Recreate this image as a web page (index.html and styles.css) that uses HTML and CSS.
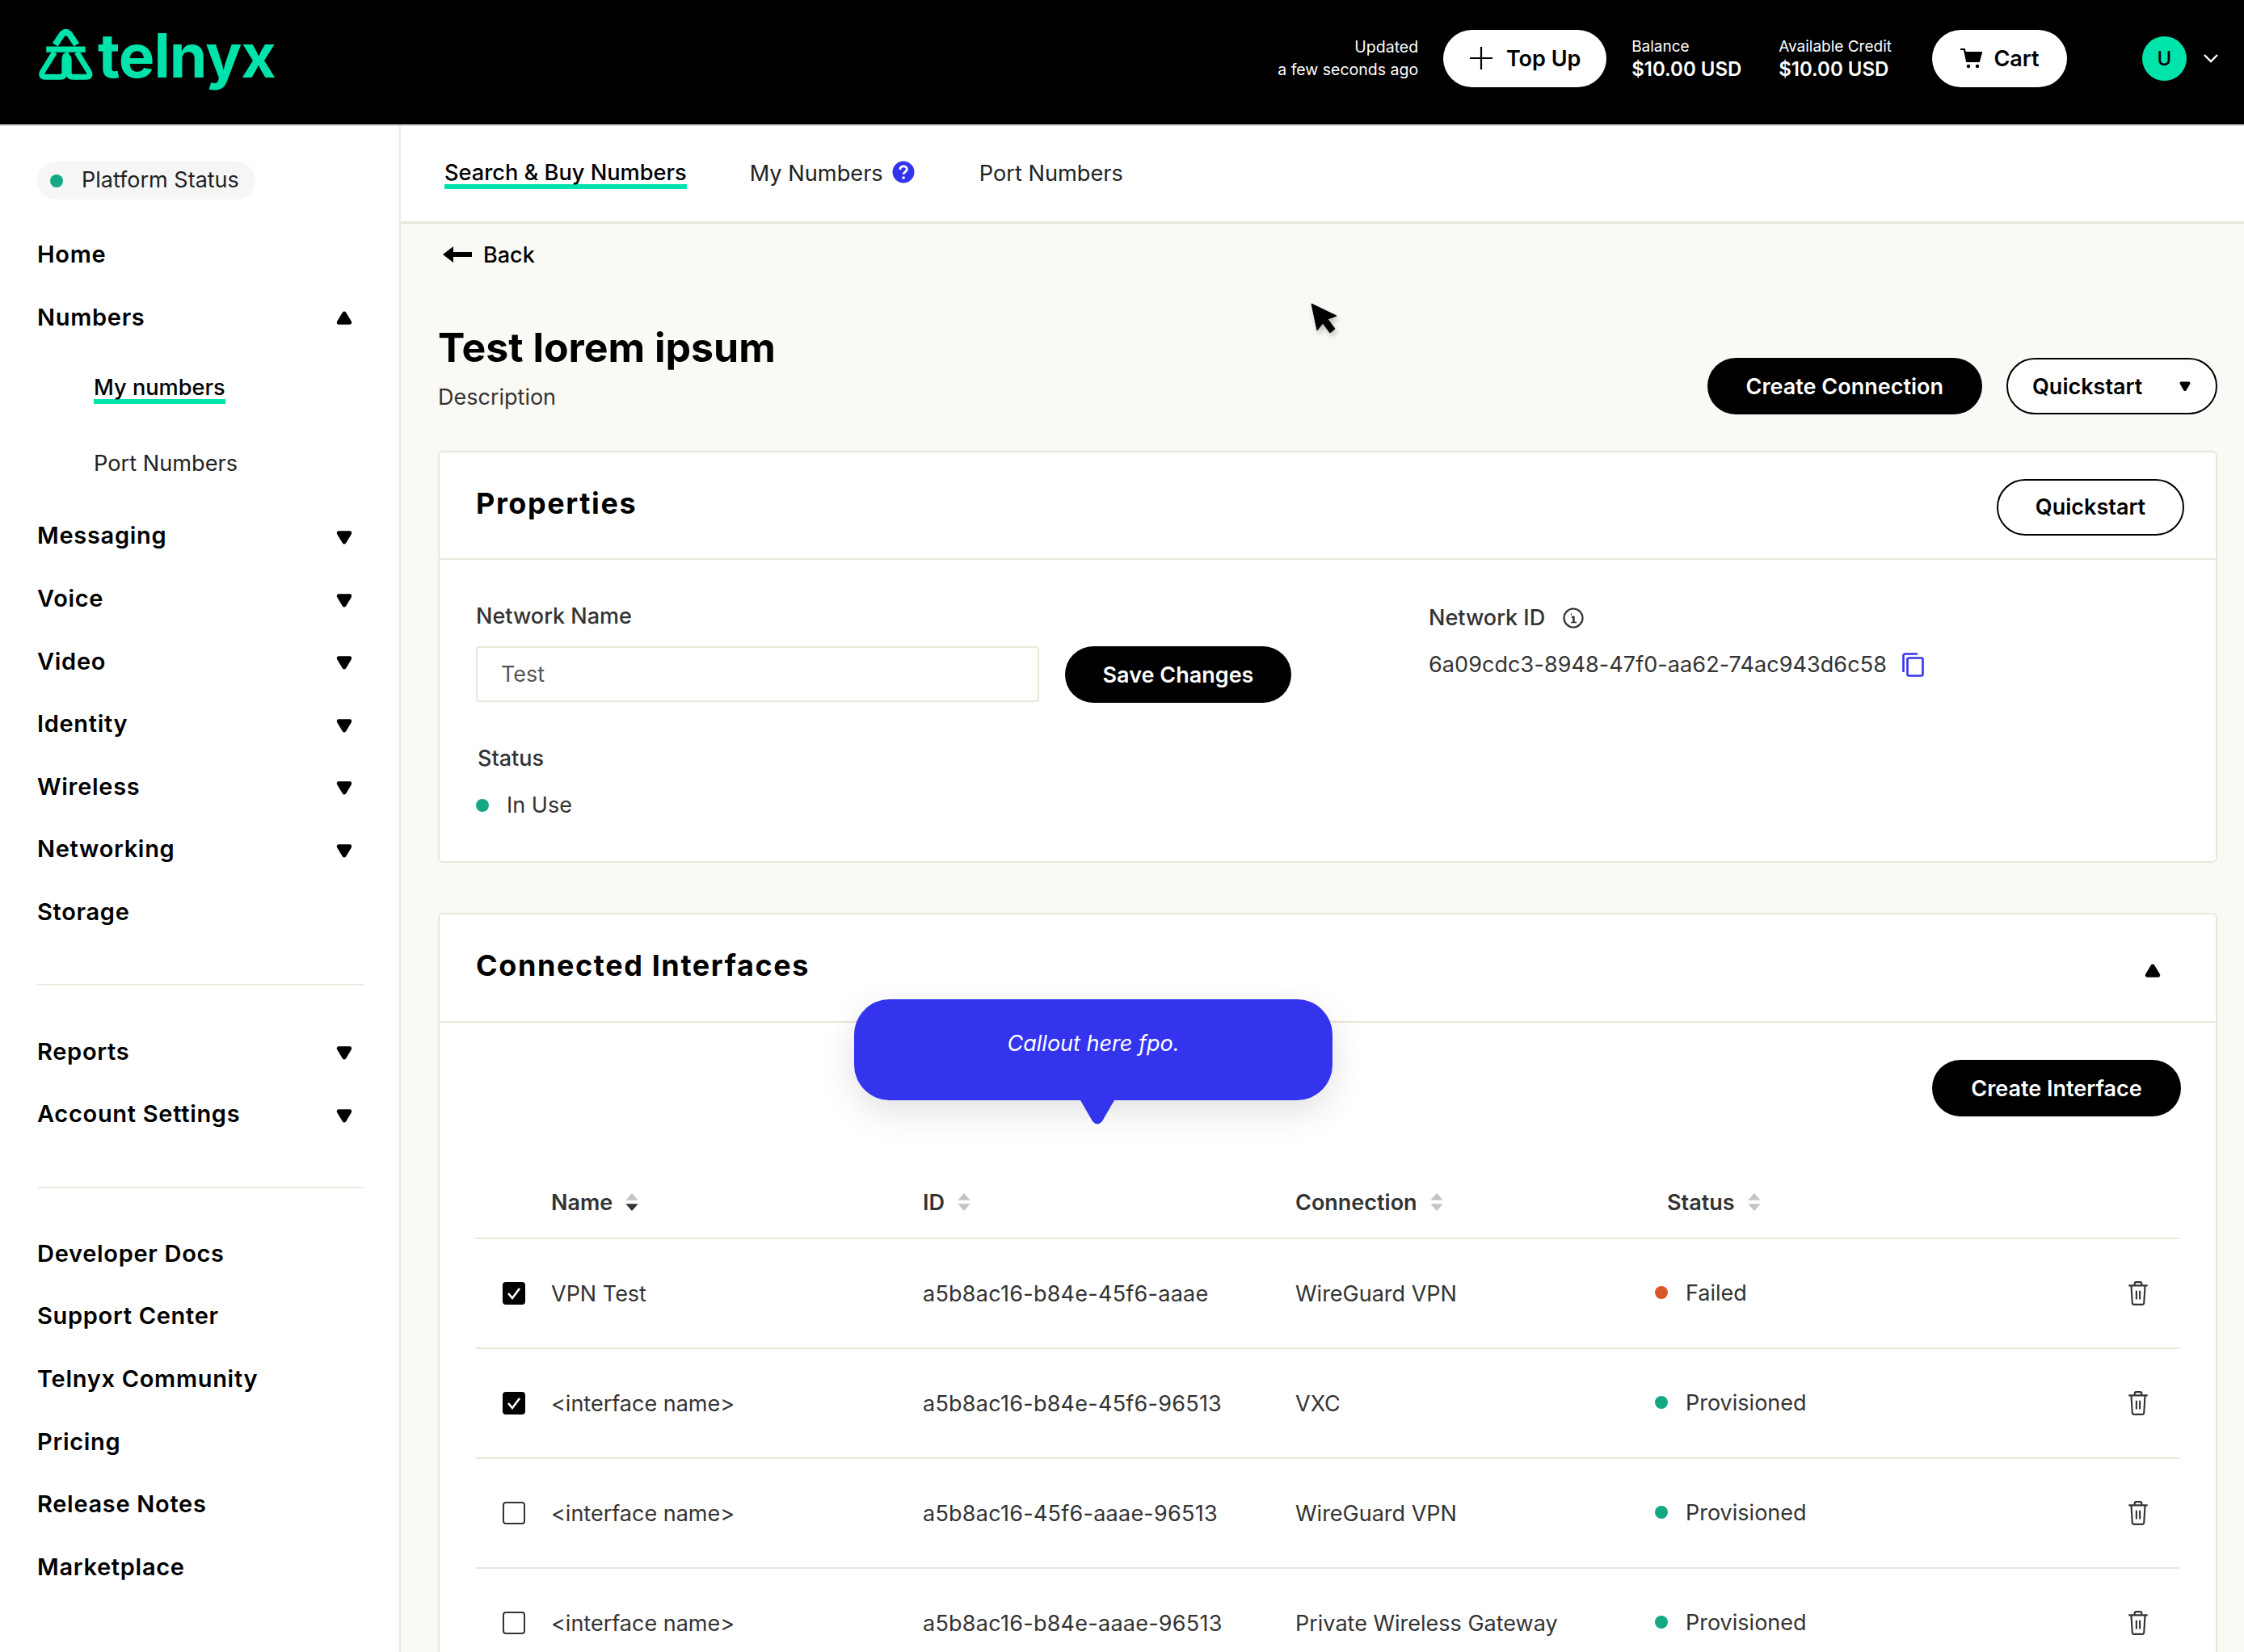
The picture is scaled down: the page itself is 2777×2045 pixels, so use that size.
FILE: index.html
```html
<!DOCTYPE html>
<html lang="en">
<head>
    <meta charset="UTF-8">
    <meta name="viewport" content="width=device-width, initial-scale=1.0">
    <title>Telnyx - Test lorem ipsum</title>
    <link rel="stylesheet" href="styles.css">
</head>
<body>
    <svg class="defs" width="0" height="0">
        <symbol id="caret-down" viewBox="0 0 20 18"><path d="M4 2h12c2 0 3 2 2 3.600l-6 10c-1 1.500-3 1.500-4 0l-6-10C1 4 2 2 4 2z"/></symbol>
        <symbol id="caret-up" viewBox="0 0 20 18"><path d="M4 16h12c2 0 3-2 2-3.600l-6-10c-1-1.500-3-1.500-4 0l-6 10C1 14 2 16 4 16z"/></symbol>
        <symbol id="trash" viewBox="0 0 26 30"><path d="M2 6h22M5 6l1.200 20c.1 1.500 1 2 2 2h9.600c1 0 1.900-.5 2-2L21 6M9 6V3.500C9 2.500 9.500 2 10.500 2h5c1 0 1.500.5 1.500 1.500V6M11 12v10M15 12v10" fill="none" stroke="#333" stroke-width="2"/></symbol>
    </svg>

    <header class="topbar">
        <a class="logo">
            <svg class="logo-mark" viewBox="78 45 214 192" width="71" height="64">
                <g fill="none" stroke="#00e3aa" stroke-width="24">
                    <path d="M145 103l27-40q13-13 26 0l27 40"/>
                    <path d="M112 120h146" stroke-width="22"/>
                    <path d="M143 131L97 205q-7 18 12 18h55q16 0 16-16v-48q0-18 16-18" stroke-width="21"/>
                    <path d="M226 131l46 74q7 18-12 18h-48q-16 0-16-16v-48q0-12-14-16" stroke-width="21"/>
                </g>
            </svg>
            <span class="logo-word">telnyx</span>
        </a>
        <div class="topbar-right">
            <div class="updated">Updated<br>a few seconds ago</div>
            <button class="btn-white topup">
                <svg width="30" height="30" viewBox="0 0 30 30"><path d="M15 1v28M1 15h28" stroke="#000" stroke-width="2.200"/></svg>
                Top Up
            </button>
            <div class="money balance"><span>Balance</span><b>$10.00 USD</b></div>
            <div class="money credit"><span>Available Credit</span><b>$10.00 USD</b></div>
            <button class="btn-white cart">
                <svg width="28" height="28" viewBox="0 0 28 28"><path d="M1 3h5l1 4h20l-3 11H9L6 4" fill="#000" stroke="#000" stroke-width="2"/><circle cx="11" cy="24" r="2.200"/><circle cx="22" cy="24" r="2.200"/></svg>
                Cart
            </button>
            <div class="avatar">U</div>
            <svg class="chevron" width="20" height="12" viewBox="0 0 20 12"><path d="M2 2l8 8 8-8" fill="none" stroke="#fff" stroke-width="2.400"/></svg>
        </div>
    </header>

    <div class="layout">
        <aside class="sidebar">
            <div class="platform-status"><i class="dot green"></i><span>Platform Status</span></div>
            <nav class="nav first">
                <a class="nav-item">Home</a>
                <a class="nav-item">Numbers <svg class="caret"><use href="#caret-up"/></svg></a>
                <div class="sub">
                    <a class="sub-item"><span class="active">My numbers</span></a>
                    <a class="sub-item">Port Numbers</a>
                </div>
                <a class="nav-item">Messaging <svg class="caret"><use href="#caret-down"/></svg></a>
                <a class="nav-item">Voice <svg class="caret"><use href="#caret-down"/></svg></a>
                <a class="nav-item">Video <svg class="caret"><use href="#caret-down"/></svg></a>
                <a class="nav-item">Identity <svg class="caret"><use href="#caret-down"/></svg></a>
                <a class="nav-item">Wireless <svg class="caret"><use href="#caret-down"/></svg></a>
                <a class="nav-item">Networking <svg class="caret"><use href="#caret-down"/></svg></a>
                <a class="nav-item">Storage</a>
            </nav>
            <hr class="nav-line">
            <nav class="nav">
                <a class="nav-item">Reports <svg class="caret"><use href="#caret-down"/></svg></a>
                <a class="nav-item">Account Settings <svg class="caret"><use href="#caret-down"/></svg></a>
            </nav>
            <hr class="nav-line">
            <nav class="nav">
                <a class="nav-item">Developer Docs</a>
                <a class="nav-item">Support Center</a>
                <a class="nav-item">Telnyx Community</a>
                <a class="nav-item">Pricing</a>
                <a class="nav-item">Release Notes</a>
                <a class="nav-item">Marketplace</a>
            </nav>
        </aside>

        <main class="main">
            <div class="tabs">
                <a class="tab active-tab"><span class="active">Search &amp; Buy Numbers</span></a>
                <a class="tab help-tab">My Numbers
                    <svg width="28" height="28" viewBox="0 0 28 28"><circle cx="14" cy="14" r="13.500" fill="#3434ef"/><path d="M9.800 11c0-2.700 2-4.200 4.300-4.200s4.200 1.500 4.200 3.800c0 3.300-4.200 3.200-4.200 6.200" fill="none" stroke="#fff" stroke-width="2.800"/><circle cx="14.100" cy="21" r="1.800" fill="#fff"/></svg>
                </a>
                <a class="tab port-tab">Port Numbers</a>
            </div>

            <div class="content">
                <a class="back">
                    <svg width="36" height="20" viewBox="0 0 36 20"><path d="M0 10L13 0v7h23v6H13v7z"/></svg>
                    Back
                </a>
                <div class="page-head">
                    <div>
                        <h1>Test lorem ipsum</h1>
                        <p class="desc">Description</p>
                    </div>
                    <div class="head-actions">
                        <button class="btn-black">Create Connection</button>
                        <button class="btn-outline quick-caret">Quickstart <svg width="16" height="14"><use href="#caret-down"/></svg></button>
                    </div>
                </div>

                <section class="card">
                    <div class="card-head">
                        <h2>Properties</h2>
                        <button class="btn-outline quick">Quickstart</button>
                    </div>
                    <div class="props">
                        <div>
                            <label class="label">Network Name</label>
                            <div class="name-row">
                                <input class="input" type="text" value="Test">
                                <button class="btn-black save">Save Changes</button>
                            </div>
                            <div class="label status-label">Status</div>
                            <div class="in-use"><i class="dot green"></i>In Use</div>
                        </div>
                        <div class="network-id">
                            <div class="label">Network ID
                                <svg width="26" height="26" viewBox="0 0 26 26"><circle cx="13" cy="13" r="11.500" fill="none" stroke="#333" stroke-width="2.200"/><path d="M10 8.500h1M11 12h2.500v6.500" fill="none" stroke="#333" stroke-width="2.400"/><path d="M10 18.500h7" stroke="#333" stroke-width="1.600"/></svg>
                            </div>
                            <div class="id-row">6a09cdc3-8948-47f0-aa62-74ac943d6c58
                                <svg width="27" height="30" viewBox="0 0 27 30"><path d="M19 1.500H3.500c-1 0-2 1-2 2V24" fill="none" stroke="#3434ef" stroke-width="2.600"/><rect x="6.500" y="6.500" width="19" height="22" rx="2" fill="none" stroke="#3434ef" stroke-width="2.600"/></svg>
                            </div>
                        </div>
                    </div>
                </section>

                <section class="card interfaces">
                    <div class="card-head">
                        <h2>Connected Interfaces</h2>
                        <svg class="card-caret"><use href="#caret-up"/></svg>
                    </div>
                    <div class="callout">Callout here fpo.</div>
                    <div class="table-wrap">
                        <div class="table-actions"><button class="btn-black">Create Interface</button></div>
                        <div class="row head-row">
                            <span></span>
                            <span class="th">Name <svg width="20" height="24" viewBox="0 0 18 22"><path d="M9 1l7 8H2z" fill="#c4c4c4"/><path d="M9 21l7-8H2z" fill="#333"/></svg></span>
                            <span class="th">ID <svg width="20" height="24" viewBox="0 0 18 22"><path d="M9 1l7 8H2zM9 21l7-8H2z" fill="#c4c4c4"/></svg></span>
                            <span class="th">Connection <svg width="20" height="24" viewBox="0 0 18 22"><path d="M9 1l7 8H2zM9 21l7-8H2z" fill="#c4c4c4"/></svg></span>
                            <span class="th">Status <svg width="20" height="24" viewBox="0 0 18 22"><path d="M9 1l7 8H2zM9 21l7-8H2z" fill="#c4c4c4"/></svg></span>
                            <span></span>
                        </div>
                        <div class="row">
                            <span class="check on"><svg width="20" height="18" viewBox="0 0 20 18"><path d="M3 9l5 6L17 3" fill="none" stroke="#fff" stroke-width="2.600"/></svg></span>
                            <span>VPN Test</span>
                            <span class="cell-id">a5b8ac16-b84e-45f6-aaae</span>
                            <span>WireGuard VPN</span>
                            <span class="status"><i class="dot red"></i>Failed</span>
                            <svg class="trash"><use href="#trash"/></svg>
                        </div>
                        <div class="row">
                            <span class="check on"><svg width="20" height="18" viewBox="0 0 20 18"><path d="M3 9l5 6L17 3" fill="none" stroke="#fff" stroke-width="2.600"/></svg></span>
                            <span>&lt;interface name&gt;</span>
                            <span class="cell-id">a5b8ac16-b84e-45f6-96513</span>
                            <span>VXC</span>
                            <span class="status"><i class="dot green"></i>Provisioned</span>
                            <svg class="trash"><use href="#trash"/></svg>
                        </div>
                        <div class="row">
                            <span class="check"></span>
                            <span>&lt;interface name&gt;</span>
                            <span class="cell-id">a5b8ac16-45f6-aaae-96513</span>
                            <span>WireGuard VPN</span>
                            <span class="status"><i class="dot green"></i>Provisioned</span>
                            <svg class="trash"><use href="#trash"/></svg>
                        </div>
                        <div class="row">
                            <span class="check"></span>
                            <span>&lt;interface name&gt;</span>
                            <span class="cell-id">a5b8ac16-b84e-aaae-96513</span>
                            <span>Private Wireless Gateway</span>
                            <span class="status"><i class="dot green"></i>Provisioned</span>
                            <svg class="trash"><use href="#trash"/></svg>
                        </div>
                    </div>
                </section>
            </div>

            <svg class="cursor" width="34" height="38" viewBox="0 0 34 38"><path d="M1 1l31 15-11 4 9 12-6 5-9-12-7 9z" stroke="#000"/></svg>
        </main>
    </div>
</body>
</html>
```

FILE: styles.css
```css
* {
    box-sizing: border-box;
}
body {
    font-family: Inter, "Noto Sans", sans-serif;
    font-size: 27px;
    color: #333;
    margin: 0;
    height: 100vh;
    overflow: hidden;
    background-color: #faf9f5;
    display: flex;
    flex-direction: column;
}
h1, h2, p {
    margin: 0;
}
button {
    font-family: inherit;
    cursor: pointer;
}
.defs {
    position: absolute;
}

/* top bar */
.topbar {
    height: 156px;
    flex: none;
    background-color: #000;
    border-bottom: 2px solid #ddd;
    display: flex;
    align-items: center;
    justify-content: space-between;
    padding: 0 31px 10px 46px;
}
.logo {
    display: flex;
    align-items: flex-start;
    height: 76px;
    margin-top: 4px;
}
.logo-word {
    color: #00e3aa;
    font-size: 75px;
    font-weight: 700;
    letter-spacing: -1px;
    line-height: 72px;
    margin-left: 4px;
    margin-top: -3px;
}
.topbar-right {
    display: flex;
    align-items: center;
    color: #fff;
}
.updated {
    font-size: 19.500px;
    line-height: 28px;
    text-align: right;
    margin-right: 31px;
}
.btn-white {
    height: 71px;
    border: none;
    border-radius: 36px;
    background-color: #fff;
    color: #000;
    font-size: 27px;
    font-weight: 600;
    display: flex;
    align-items: center;
    justify-content: center;
}
.topup {
    width: 202px;
    gap: 16px;
}
.cart {
    width: 167px;
    gap: 14px;
    margin-left: 50px;
}
.money {
    display: flex;
    flex-direction: column;
    font-size: 19px;
    line-height: 28px;
    white-space: nowrap;
}
.money b {
    font-size: 24px;
    font-weight: 600;
}
.balance {
    width: 135px;
    margin-left: 31px;
}
.credit {
    margin-left: 47px;
}
.avatar {
    width: 55px;
    height: 55px;
    border-radius: 50%;
    background-color: #00e3aa;
    color: #000;
    font-size: 24px;
    font-weight: 500;
    display: flex;
    align-items: center;
    justify-content: center;
    margin-left: 93px;
}
.chevron {
    margin-left: 20px;
}

.layout {
    flex: 1;
    display: flex;
    min-height: 0;
}

/* sidebar */
.sidebar {
    width: 496px;
    flex: none;
    background-color: #fff;
    border-right: 2px solid #ebeae0;
    padding: 44px 44px 0 46px;
}
.platform-status {
    display: inline-flex;
    align-items: center;
    height: 47px;
    padding: 0 16px;
    border-radius: 24px;
    background-color: #f6f6f6;
    color: #222;
    width: 270px;
}
.platform-status .dot {
    margin-right: 23px;
}
.platform-status span {
    margin-bottom: 2px;
}
.dot {
    display: inline-block;
    width: 16px;
    height: 16px;
    border-radius: 50%;
    flex: none;
}
.dot.green {
    background-color: #14a883;
}
.dot.red {
    background-color: #d9552b;
}
.nav.first {
    margin-top: 29px;
}
.nav-item {
    display: flex;
    align-items: center;
    justify-content: space-between;
    height: 77.600px;
    color: #000;
    font-size: 29px;
    font-weight: 600;
    letter-spacing: 0.700px;
}
.caret {
    width: 22px;
    height: 20px;
    margin-right: 13px;
    margin-top: 4px;
}
.sub {
    padding: 3px 0 4px 70px;
}
.sub-item {
    display: flex;
    align-items: center;
    height: 93px;
    color: #222;
    font-size: 27.200px;
}
.active {
    display: inline-block;
    line-height: 28px;
    border-bottom: 6px solid #00e3aa;
    color: #000;
    font-weight: 500;
}
.sub-item .active {
    margin-top: 4px;
}
.nav-line {
    border: none;
    border-top: 2px solid #ebeae0;
    margin: 51px 0 42px;
    width: 404px;
}

/* main column */
.main {
    flex: 1;
    min-width: 0;
    position: relative;
}
.tabs {
    height: 121px;
    background-color: #fff;
    border-bottom: 3px solid #e8e7da;
    display: flex;
    align-items: center;
    padding: 0 0 2px 54px;
    color: #222;
    font-size: 27.200px;
}
.tab {
    display: flex;
    align-items: center;
}
.active-tab {
    padding-top: 6px;
}
.help-tab {
    margin-left: 78px;
    gap: 11px;
}
.help-tab svg {
    margin-top: -3px;
}
.port-tab {
    margin-left: 80px;
}
.content {
    padding: 21px 33px 0 46px;
}
.back {
    display: flex;
    align-items: center;
    gap: 14px;
    height: 34px;
    margin-left: 6px;
    color: #000;
    font-weight: 500;
}
.page-head {
    display: flex;
    justify-content: space-between;
    align-items: flex-end;
    margin-top: 68px;
}
h1 {
    font-size: 50px;
    line-height: 60px;
    font-weight: 700;
    color: #000;
}
.desc {
    line-height: 34px;
    margin-top: 15px;
    margin-bottom: 4px;
}
.head-actions {
    display: flex;
    gap: 30px;
}
.btn-black {
    height: 70px;
    padding: 0 48px;
    border: none;
    border-radius: 35px;
    background-color: #000;
    color: #fff;
    font-size: 27px;
    font-weight: 600;
}
.btn-outline {
    height: 70px;
    border: 2px solid #000;
    border-radius: 35px;
    background-color: #fff;
    color: #000;
    font-size: 27px;
    font-weight: 600;
}
.quick-caret {
    width: 261px;
    display: flex;
    align-items: center;
    justify-content: space-between;
    padding: 0 30px;
}
.quick {
    width: 232px;
    margin-top: 4px;
}

/* cards */
.card {
    background-color: #fff;
    border: 2px solid #e8e7da;
    border-radius: 6px;
    margin-top: 45px;
}
.card-head {
    height: 133px;
    border-bottom: 2px solid #e8e7da;
    display: flex;
    align-items: center;
    justify-content: space-between;
    padding: 0 39px 0 45px;
}
h2 {
    font-size: 36px;
    font-weight: 700;
    letter-spacing: 1.600px;
    color: #000;
    margin-bottom: 6px;
}
.props {
    display: grid;
    grid-template-columns: 1179px 1fr;
    padding: 53px 45px 52px;
}
.label {
    display: block;
    line-height: 34px;
    font-weight: 500;
}
.name-row {
    display: flex;
    gap: 32px;
    margin-top: 20px;
}
.input {
    width: 697px;
    height: 69px;
    padding: 0 29px;
    border: 2px solid #e8e7da;
    border-radius: 4px;
    background-color: #fff;
    font: inherit;
    color: #555;
}
.save {
    width: 280px;
    padding: 0;
}
.status-label {
    margin: 52px 0 0 2px;
}
.in-use {
    display: flex;
    align-items: center;
    gap: 22px;
    line-height: 34px;
    margin-top: 24px;
}
.network-id {
    padding-top: 2px;
}
.network-id .label {
    display: flex;
    align-items: center;
    gap: 22px;
}
.id-row {
    display: flex;
    align-items: center;
    gap: 19px;
    line-height: 34px;
    letter-spacing: 0.080px;
    margin-top: 24px;
}

.interfaces {
    position: relative;
    margin-top: 62px;
}
.interfaces .card-head {
    height: 134px;
}
.card-caret {
    width: 22px;
    height: 20px;
    margin-right: 28px;
    margin-top: 8px;
}
.callout {
    position: absolute;
    left: 513px;
    top: 105px;
    width: 592px;
    height: 125px;
    border-radius: 44px;
    background-color: #3434ef;
    color: #fff;
    font-style: italic;
    text-align: center;
    padding-top: 38px;
    line-height: 34px;
    box-shadow: 0 14px 44px rgba(0, 0, 0, 0.12);
}
.callout::after {
    content: "";
    position: absolute;
    left: 280px;
    top: 122px;
    width: 42px;
    height: 34px;
    background-color: #3434ef;
    clip-path: path("M0 3H42L27 29Q21 36 15 29Z");
}
.table-wrap {
    padding: 46px 45px 0;
}
.table-actions {
    display: flex;
    justify-content: flex-end;
}
.table-actions .btn-black {
    width: 308px;
    padding: 0;
    margin-right: -2px;
}
.row {
    display: grid;
    grid-template-columns: 93px 460px 461px 460px 1fr 26px;
    align-items: center;
    height: 136px;
    padding-right: 38px;
    border-bottom: 2px solid #e8e7da;
}
.head-row {
    height: 88px;
    margin-top: 64px;
}
.th {
    display: flex;
    align-items: center;
    gap: 14px;
    font-weight: 600;
    margin-top: -2px;
}
.cell-id {
    letter-spacing: 0.250px;
}
.check {
    width: 28px;
    height: 28px;
    margin-left: 33px;
    border: 2px solid #333;
    border-radius: 4px;
    display: flex;
    align-items: center;
    justify-content: center;
}
.check.on {
    background-color: #000;
    border-color: #000;
}
.status {
    display: flex;
    align-items: center;
    gap: 22px;
    margin-left: -15px;
    margin-top: -2px;
}
.trash {
    width: 28px;
    height: 32px;
    margin-left: -1px;
}
.cursor {
    position: absolute;
    left: 1126px;
    top: 219px;
    filter: drop-shadow(2px 4px 3px rgba(0, 0, 0, 0.25));
}
```
